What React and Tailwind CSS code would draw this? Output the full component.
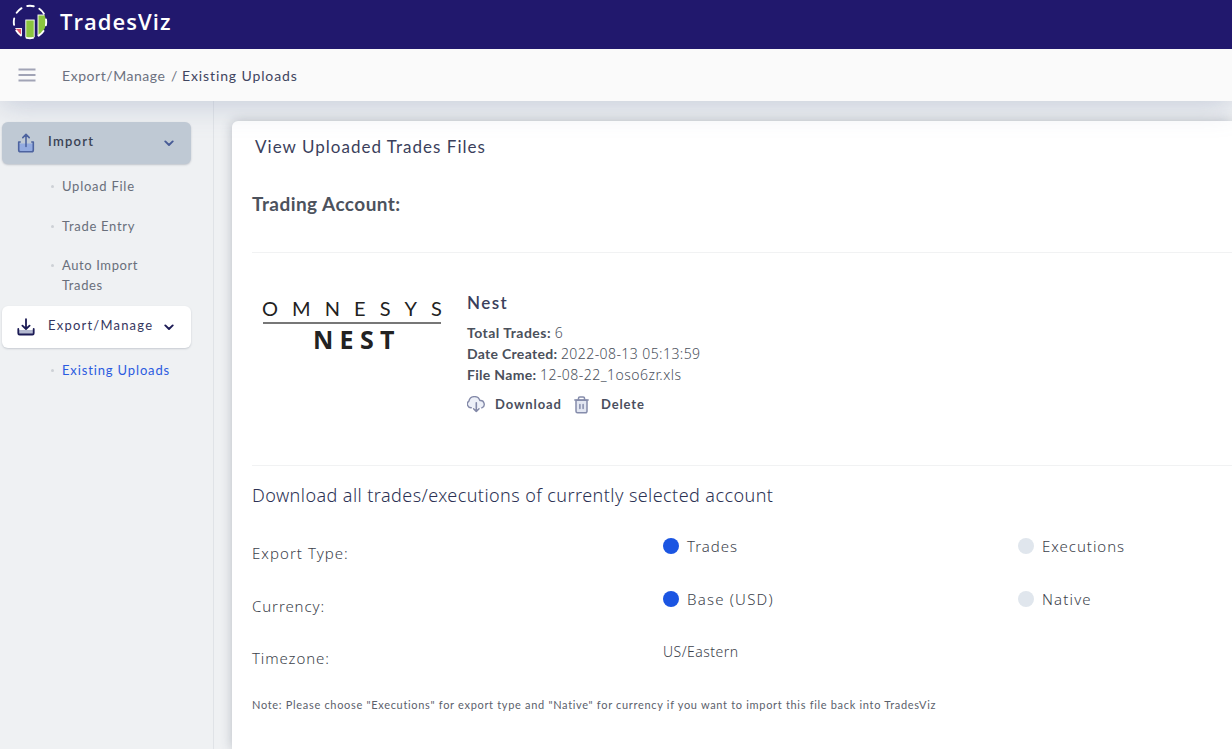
import React from "react";

const LATO = "font-['Lato','Liberation_Sans',sans-serif]";
const NOTO = "font-['Noto_Sans','Open_Sans',sans-serif]";

function Logo() {
  return (
    <svg width="36" height="36" viewBox="0 0 36 36" className="shrink-0">
      <defs>
        <clipPath id="disc"><circle cx="18" cy="18" r="16" /></clipPath>
      </defs>
      <g clipPath="url(#disc)" stroke="#fff" strokeWidth="0.9">
        <rect x="0" y="24.5" width="9.5" height="14" fill="#e0566c" />
        <rect x="13.8" y="16" width="8.4" height="20" fill="#8bc53f" />
        <rect x="26" y="11" width="9" height="25" fill="#8bc53f" />
      </g>
      <circle cx="18" cy="18" r="16.2" fill="none" stroke="#fff" strokeWidth="1.9" strokeDasharray="6.7 6.020" strokeDashoffset="3.300" strokeLinecap="round" />
    </svg>
  );
}

function Chevron({ color }) {
  return (
    <svg width="10" height="7" viewBox="0 0 10 7" fill="none" stroke={color} strokeWidth="1.9" strokeLinecap="round" strokeLinejoin="round">
      <path d="M1.3 1.4 5 5l3.7-3.6" />
    </svg>
  );
}

function UploadIcon() {
  return (
    <svg width="18" height="20" viewBox="0 0 18 20" fill="none" stroke="#4d639f" strokeWidth="1.6" strokeLinecap="round" strokeLinejoin="round">
      <path d="M2 10.500h14V17a1.8 1.8 0 0 1-1.8 1.8H3.800A1.800 1.800 0 0 1 2 17z" fill="#93abe0" stroke="none" />
      <path d="M3.200 9H1.700V17a1.800 1.800 0 0 0 1.800 1.800h11A1.800 1.800 0 0 0 16.300 17V9H14.800M9 13.500V1.500M5.800 4.600 9 1.400l3.200 3.200" />
    </svg>
  );
}

function DownloadIcon() {
  return (
    <svg width="18" height="18" viewBox="0 0 18 18" fill="none" stroke="#1c1b55" strokeWidth="1.800" strokeLinecap="round" strokeLinejoin="round">
      <path d="M2 12h14v4H2z" fill="#b3b8cf" stroke="none" />
      <path d="M1.300 11v4.200a1.300 1.300 0 0 0 1.300 1.300h12.800a1.300 1.300 0 0 0 1.300-1.300V11M9 1.200v9.600M5.400 7.600 9 11l3.600-3.400" />
    </svg>
  );
}

function CloudIcon() {
  return (
    <svg width="19" height="17" viewBox="0 0 19 17" fill="none" stroke="#8389a8" strokeWidth="1.400" strokeLinecap="round" strokeLinejoin="round">
      <path d="M4.300 11.800A3.700 3.700 0 0 1 1.900 5.100 5.700 5.700 0 0 1 12.900 4.600a3.800 3.800 0 0 1 1.900 7.300" fill="#edf0f8" />
      <path d="M9.300 6.800v8.600M6.600 12.800l2.700 2.700 2.700-2.700" strokeWidth="1.600" />
    </svg>
  );
}

function TrashIcon() {
  return (
    <svg width="15" height="18" viewBox="0 0 15 18" fill="none" stroke="#858cab" strokeWidth="1.500" strokeLinecap="round" strokeLinejoin="round">
      <path d="M2 4.300h11v11a1.500 1.500 0 0 1-1.500 1.500H3.500a1.500 1.500 0 0 1-1.500-1.500z" fill="#e3e7f2" />
      <path d="M.8 4.100h13.400M4.500 3.800V2.300A1.300 1.300 0 0 1 5.800 1h3.400a1.300 1.300 0 0 1 1.300 1.300v1.500M5.900 8.500v4M9.100 8.500v4" />
    </svg>
  );
}

function SubItem({ children, className = "text-[#696f7b]" }) {
  return (
    <li className={`flex text-[13px] leading-[20px] ${className}`}>
      <span className="mr-[8px] mt-[9px] size-[3px] shrink-0 rounded-full bg-[#cdd1d6]" />
      <span>{children}</span>
    </li>
  );
}

function Radio({ on, children }) {
  return (
    <label className={`flex h-[20px] items-center text-[15px] font-light leading-[20px] text-[#3c424b] ${NOTO}`}>
      <span className={`relative -top-px mr-[8px] size-[16px] rounded-full ${on ? "bg-[#1b55e2]" : "bg-[#e0e6ed]"}`} />
      <span className="relative -top-px">{children}</span>
    </label>
  );
}

function Header() {
  return (
    <>
      <header className="relative z-20 flex h-[49px] items-center bg-[#21186d] pb-[5px] pl-[12px]">
        <Logo />
        <span className="relative -top-px ml-[12px] font-['Open_Sans','Noto_Sans',sans-serif] text-[22px] font-semibold leading-[30px] tracking-[1.050px] text-white">TradesViz</span>
      </header>
      <nav className="relative z-10 flex h-[52px] items-center bg-[#fafafa] pl-[18px] text-[14px] shadow-[0_4px_30px_0_rgba(130,142,175,0.38)]">
        <svg width="18" height="14" viewBox="0 0 18 14" stroke="#a1a4b6" strokeWidth="1.800">
          <path d="M.5 1.500h17M.5 7h17M.5 12.500h17" />
        </svg>
        <span className="ml-[26px] w-[109px] tracking-[0.550px] text-[#6c7180]">Export/Manage</span>
        <span className="w-[11px] text-[#6c7180]">/</span>
        <span className="tracking-[0.880px] text-[#3f4560]">Existing Uploads</span>
      </nav>
    </>
  );
}

function Sidebar() {
  return (
    <aside className="w-[214px] shrink-0 border-r border-[#e0e3e7] pl-[2px] pt-[21px]">
      <div className="relative z-20 flex h-[42px] w-[189px] items-center rounded-[6px] bg-[#bfc9d4] pl-[15px] pr-[17px] shadow-[0_1px_2px_rgba(80,90,110,0.3)]">
        <UploadIcon />
        <span className="relative -top-px ml-[13px] flex-1 text-[13px] font-semibold tracking-[1.240px] text-[#3a4254]">Import</span>
        <Chevron color="#475b96" />
      </div>
      <ul className="flex flex-col gap-[19.500px] pb-[11px] pl-[49px] pt-[12px]">
        <SubItem><span className="tracking-[0.750px]">Upload File</span></SubItem>
        <SubItem><span className="tracking-[0.700px]">Trade Entry</span></SubItem>
        <SubItem><span className="tracking-[0.600px]">Auto Import<br />Trades</span></SubItem>
      </ul>
      <div className="flex h-[42px] w-[189px] items-center rounded-[6px] bg-white pl-[15px] pr-[17px] shadow-[0_1px_2px_rgba(80,90,110,0.25)]">
        <DownloadIcon />
        <span className="relative -top-px ml-[13px] flex-1 text-[13px] tracking-[1.210px] text-[#35365e]">Export/Manage</span>
        <Chevron color="#1c1b55" />
      </div>
      <ul className="pl-[49px] pt-[12px]">
        <SubItem className="text-[#2b5be0]"><span className="tracking-[0.860px]">Existing Uploads</span></SubItem>
      </ul>
    </aside>
  );
}

function UploadEntry() {
  return (
    <section className="flex h-[213px] border-t border-[#f1f2f3] pt-[38px]">
      <div className="flex w-[215px] flex-col pl-[10px] pt-[7px] font-['Lato','Liberation_Sans',sans-serif] text-[#222]">
        <div className="flex h-[24px] w-[180px] justify-between text-[20px] leading-[21px]">
          {"OMNESYS".split("").map((c, i) => <span key={i}>{c}</span>)}
        </div>
        <div className="ml-px h-[2px] w-[178px] bg-[#777]" />
        <div className="h-[30px] pl-[51px] font-['Open_Sans','Noto_Sans',sans-serif] text-[25px] font-bold leading-[31px] tracking-[6.300px]">NEST</div>
      </div>
      <div className="text-[14px] leading-[21px] text-[#4a505b]">
        <h3 className="h-[31px] text-[17px] font-semibold leading-[23px] tracking-[1.450px] text-[#3b3f5c]">Nest</h3>
        <p><b className="tracking-[0.480px]">Total Trades:</b> <span className={`font-light ${NOTO}`}>6</span></p>
        <p><b className="tracking-[0.300px]">Date Created:</b> <span className={`font-light tracking-[0.430px] ${NOTO}`}>2022-08-13 05:13:59</span></p>
        <p><b className="tracking-[0.300px]">File Name:</b> <span className={`font-light tracking-[0.480px] ${NOTO}`}>12-08-22_1oso6zr.xls</span></p>
        <div className="mt-[9px] flex h-[21px] items-center text-[13px] font-bold text-[#4a4f5e]">
          <CloudIcon />
          <span className="ml-[9px] w-[79px] tracking-[0.910px]">Download</span>
          <TrashIcon />
          <span className="ml-[12px] tracking-[0.880px]">Delete</span>
        </div>
      </div>
    </section>
  );
}

function ExportForm() {
  return (
    <section className="border-t border-[#f1f2f3] pt-[18px]">
      <h2 className={`h-[53px] text-[18px] font-light leading-[23px] tracking-[0.430px] text-[#2c3254] ${NOTO}`}>Download all trades/executions of currently selected account</h2>
      <div className={`grid grid-cols-[411px_355px_1fr] text-[15px] font-light text-[#3c424b] ${NOTO}`}>
        <div className="h-[53px] pt-[6px] leading-[20px] tracking-[1.050px]">Export Type:</div>
        <Radio on><span className="tracking-[0.950px]">Trades</span></Radio>
        <Radio><span className="tracking-[0.980px]">Executions</span></Radio>
        <div className="h-[53px] pt-[6px] leading-[20px] tracking-[0.900px]">Currency:</div>
        <Radio on><span className="tracking-[1.200px]">Base (USD)</span></Radio>
        <Radio><span className="tracking-[1.150px]">Native</span></Radio>
        <div className="h-[52px] pt-[5px] leading-[20px] tracking-[0.900px]">Timezone:</div>
        <div className="text-[14px] leading-[18px] tracking-[0.480px]">US/Eastern</div>
      </div>
      <p className="text-[11px] leading-[20px] tracking-[0.685px] text-[#5b616c]">Note: Please choose "Executions" for export type and "Native" for currency if you want to import this file back into TradesViz</p>
    </section>
  );
}

export default function App() {
  return (
    <div className={`flex h-[749px] w-full flex-col overflow-hidden bg-[#eff1f3] ${LATO}`}>
      <Header />
      <div className="flex min-h-0 flex-1">
        <Sidebar />
        <main className="flex min-w-0 flex-1 pl-[18px] pt-[20px]">
          <div className="flex-1 rounded-tl-[6px] bg-white pl-[20px] shadow-[0_0_12px_rgba(60,70,90,0.3)]">
            <h1 className="pl-[3px] pt-[13px] text-[17px] leading-[25px] tracking-[1.020px] text-[#3b3f5c]">View Uploaded Trades Files</h1>
            <h2 className="h-[93px] pt-[33px] text-[19px] font-bold leading-[23px] tracking-[0.450px] text-[#4c525d]">Trading Account:</h2>
            <UploadEntry />
            <ExportForm />
          </div>
        </main>
      </div>
    </div>
  );
}
